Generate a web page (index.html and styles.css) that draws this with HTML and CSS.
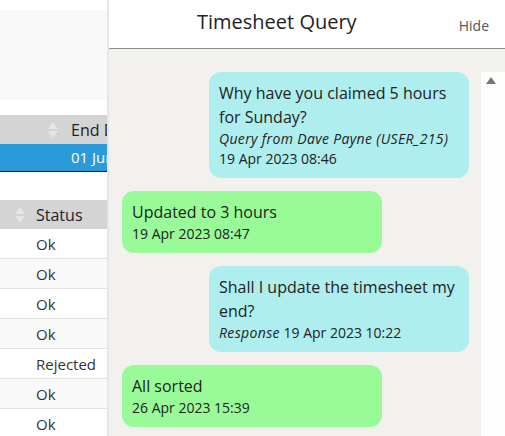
FILE: index.html
```html
<!doctype html>
<html>
  <head>
    <title>Timesheet query</title>
    <meta charset="utf-8">
    <meta name="viewport" content="width=device-width, initial-scale=1">
    <link rel="stylesheet" href="styles.css">
  </head>

  <body>
    <div class="page">
      <div class="list">
        <div class="filters"></div>
        <div class="grid">
          <div class="grid-head head-end"><span class="sort"><svg width="10" height="18" viewBox="0 0 10 18"><polygon points="0,8 5,1 10,8" /><polygon points="0,10 5,17 10,10" /></svg></span>End Date</div>
          <div class="grid-row selected">01 Jun 2023</div>
        </div>
        <div class="grid status-grid">
          <div class="grid-head head-status"><span class="sort"><svg width="10" height="18" viewBox="0 0 10 18"><polygon points="0,8 5,1 10,8" /><polygon points="0,10 5,17 10,10" /></svg></span>Status</div>
          <div class="grid-row">Ok</div>
          <div class="grid-row">Ok</div>
          <div class="grid-row">Ok</div>
          <div class="grid-row">Ok</div>
          <div class="grid-row">Rejected</div>
          <div class="grid-row">Ok</div>
          <div class="grid-row">Ok</div>
        </div>
      </div>

      <div class="drawer">
        <div class="drawer-head">
          <h1 class="drawer-title">Timesheet Query</h1>
          <span class="hide">Hide</span>
        </div>
        <div class="drawer-body">
          <div class="messages">
            <div class="msg msg-query">
              <div class="msg-text">Why have you claimed 5 hours for Sunday?</div>
              <div class="msg-meta"><em>Query from Dave Payne (USER_215)</em></div>
              <div class="msg-meta">19 Apr 2023 08:46</div>
            </div>
            <div class="msg msg-reply">
              <div class="msg-text">Updated to 3 hours</div>
              <div class="msg-meta">19 Apr 2023 08:47</div>
            </div>
            <div class="msg msg-query">
              <div class="msg-text">Shall I update the timesheet my end?</div>
              <div class="msg-meta"><em>Response</em> 19 Apr 2023 10:22</div>
            </div>
            <div class="msg msg-reply">
              <div class="msg-text">All sorted</div>
              <div class="msg-meta">26 Apr 2023 15:39</div>
            </div>
          </div>
          <div class="scrollbar"><span class="arrow-up"></span></div>
        </div>
      </div>
    </div>
  </body>
</html>
```

FILE: styles.css
```css
html, body {
  margin: 0;
  height: 100%;
  overflow: hidden;
}
body {
  font-family: "Open Sans", "Liberation Sans", sans-serif;
  color: #222;
  background: #fff;
}
.page {
  display: flex;
  height: 436px;
}
.list {
  width: 107px;
  flex: none;
  overflow: hidden;
  padding-top: 10px;
}
.filters {
  height: 90px;
  background: #f8f8f8;
  margin-bottom: 15px;
}
.grid {
  width: 300px;
}
.status-grid {
  margin-top: 28px;
}
.grid-head {
  display: flex;
  align-items: center;
  height: 29px;
  background: #d4d4d4;
  font-size: 16px;
  white-space: nowrap;
}
.head-end {
  padding-left: 48px;
}
.head-status {
  padding-left: 15px;
}
.sort {
  display: flex;
  margin-right: 13px;
}
.sort svg {
  fill: #e6e6e6;
}
.head-status .sort {
  margin-right: 11px;
}
.grid-row {
  height: 28px;
  line-height: 29px;
  padding-top: 1px;
  border-bottom: 1px solid #e2e2e2;
  padding-left: 36px;
  font-size: 15px;
  color: #333;
  background: #fff;
}
.grid-row:nth-child(odd) {
  background: #f9f9f9;
}
.grid-row.selected {
  height: 27px;
  padding-top: 0;
  line-height: 27px;
  padding-left: 71px;
  background: #2a9ad8;
  color: #fff;
  border-bottom: 1px solid #111;
}

.drawer {
  flex: 1;
  display: flex;
  flex-direction: column;
  background: #f2f1ee;
  border-left: 2px solid #e6e6e6;
}
.drawer-head {
  display: flex;
  align-items: flex-start;
  height: 48px;
  background: #fff;
  border-bottom: 1px solid #8e8e8e;
}
.drawer-title {
  margin: 8px 0 0 88px;
  font-size: 20px;
  font-weight: 400;
  color: #222;
  flex: 1;
}
.hide {
  margin: 16px 16px 0 0;
  font-size: 14px;
  color: #555;
}
.drawer-body {
  flex: 1;
  display: flex;
  padding-top: 23px;
  min-height: 0;
}
.messages {
  flex: 1;
  display: flex;
  flex-direction: column;
  padding: 0 12px 0 13px;
}
.msg {
  width: 240px;
  padding: 9px 10px;
  border-radius: 12px;
  margin-bottom: 13px;
}
.msg-query {
  align-self: flex-end;
  background: #afeeee;
}
.msg-reply {
  align-self: flex-start;
  background: #98fb98;
}
.msg-text {
  font-size: 16px;
  line-height: 24px;
}
.msg-meta {
  font-size: 14px;
  line-height: 20px;
}
.msg-meta em {
  letter-spacing: 0.35px;
}
.scrollbar {
  width: 24px;
  flex: none;
  background: #fdfdfd;
}
.arrow-up {
  display: block;
  width: 0;
  height: 0;
  margin: 5px 0 0 5px;
  border-left: 5px solid transparent;
  border-right: 5px solid transparent;
  border-bottom: 7px solid #777;
}
```
